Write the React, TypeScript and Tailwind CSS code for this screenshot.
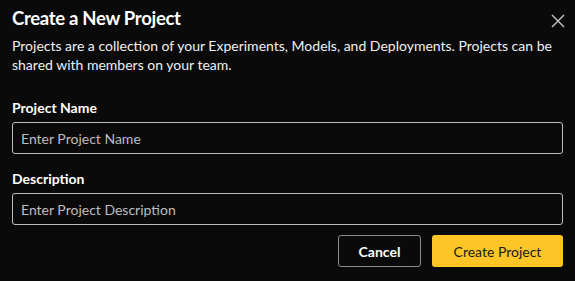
export default function App() {
  return (
    <div className="h-[281px] w-[575px] bg-[#0a0a0a] px-3 pt-[5px] text-white" style={{ fontFamily: 'Lato, "Noto Sans", sans-serif' }}>
      <div className="flex items-start justify-between">
        <h1 className="text-[18.5px] font-bold leading-[26px] tracking-[-0.3px]">Create a New Project</h1>
        <button className="mr-[-2px] mt-[9px] text-[#c8c8c8]">
          <svg width="14" height="14" viewBox="0 0 14 14" fill="none" stroke="currentColor" strokeWidth="1.4">
            <path d="M1 1L13 13M13 1L1 13" />
          </svg>
        </button>
      </div>
      <p className="mt-[5px] text-[14px] leading-[19px] text-[#f0f0f0]">
        Projects are a collection of your Experiments, Models, and Deployments. Projects can be shared with members on your team.
      </p>
      <label className="mt-[24px] block text-[14px] font-bold leading-[20px]">Project Name</label>
      <input
        className="mt-[4px] block h-8 w-full rounded-[3px] border border-[#bdbdbd] bg-[#0a0a0a] px-2 text-[14px] text-white placeholder:text-[#bdbdbd] outline-none"
        placeholder="Enter Project Name"
      />
      <label className="mt-[15px] block text-[14px] font-bold leading-[20px]">Description</label>
      <input
        className="mt-[4px] block h-8 w-full rounded-[3px] border border-[#bdbdbd] bg-[#0a0a0a] px-2 text-[14px] text-white placeholder:text-[#bdbdbd] outline-none"
        placeholder="Enter Project Description"
      />
      <div className="mt-[10px] flex justify-end gap-[11px]">
        <button className="h-8 w-[83px] rounded-[3px] border border-[#8a8a8a] text-[14px] font-bold text-white">Cancel</button>
        <button className="h-8 w-[131px] rounded-[3px] bg-[#fdc525] text-[14px] text-[#1a1a1a]">Create Project</button>
      </div>
    </div>
  );
}
